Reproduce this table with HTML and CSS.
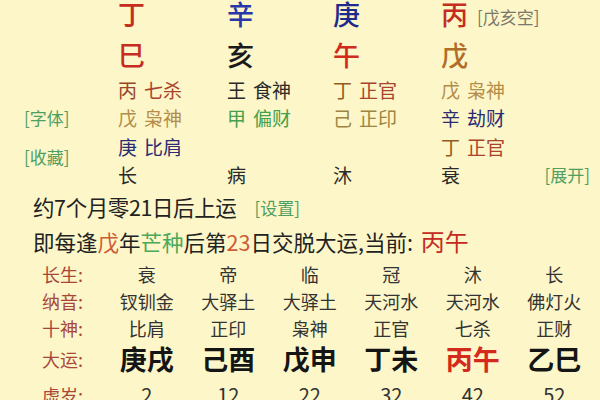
FILE: index.html
```html
<!DOCTYPE html>
<html lang="zh">
<head>
<meta charset="utf-8">
<link rel="stylesheet" href="styles.css">
</head>
<body>
<div class="pillars">
  <div class="big c-red r1 k1">丁</div>
  <div class="big c-blue r1 k2">辛</div>
  <div class="big c-navy r1 k3">庚</div>
  <div class="big c-red r1 k4">丙<span class="kong">[戊亥空]</span></div>

  <div class="big c-red r2 k1">巳</div>
  <div class="big c-black r2 k2">亥</div>
  <div class="big c-red2 r2 k3">午</div>
  <div class="big c-brown r2 k4">戊</div>

  <div class="sub r3 k1"><span class="c-rb">丙</span><span class="god c-rb2">七杀</span></div>
  <div class="sub r3 k2"><span class="c-dk">王</span><span class="god c-dk">食神</span></div>
  <div class="sub r3 k3"><span class="c-or">丁</span><span class="god c-rb2">正官</span></div>
  <div class="sub r3 k4"><span class="c-gold">戊</span><span class="god c-gold">枭神</span></div>

  <div class="link r4 k0">[字体]</div>
  <div class="sub r4 k1"><span class="c-gold">戊</span><span class="god c-gold">枭神</span></div>
  <div class="sub r4 k2"><span class="c-green">甲</span><span class="god c-green">偏财</span></div>
  <div class="sub r4 k3"><span class="c-olive">己</span><span class="god c-olive">正印</span></div>
  <div class="sub r4 k4"><span class="c-ink">辛</span><span class="god c-ink">劫财</span></div>

  <div class="link r56 k0">[收藏]</div>
  <div class="sub r5 k1"><span class="c-ink">庚</span><span class="god c-ink">比肩</span></div>
  <div class="sub r5 k4"><span class="c-or">丁</span><span class="god c-rb2">正官</span></div>

  <div class="sub c-dk r6 k1">长</div>
  <div class="sub c-dk r6 k2">病</div>
  <div class="sub c-dk r6 k3">沐</div>
  <div class="sub c-dk r6 k4">衰</div>
  <div class="link r6 k5 expand">[展开]</div>
</div>

<div class="info">
  <div class="line l1">约7个月零21日后上运<span class="set">[设置]</span></div>
  <div class="line l2">即每逢<span class="hl-red">戊</span>年<span class="hl-green">芒种</span>后第<span class="hl-red">23</span>日交脱大运,当前: <span class="now">丙午</span></div>
</div>

<div class="yun">
  <div class="lab t1">长生:</div>
  <div class="cell t1">衰</div><div class="cell t1">帝</div><div class="cell t1">临</div><div class="cell t1">冠</div><div class="cell t1">沐</div><div class="cell t1">长</div>

  <div class="lab t2">纳音:</div>
  <div class="cell t2">钗钏金</div><div class="cell t2">大驿土</div><div class="cell t2">大驿土</div><div class="cell t2">天河水</div><div class="cell t2">天河水</div><div class="cell t2">佛灯火</div>

  <div class="lab t3">十神:</div>
  <div class="cell t3">比肩</div><div class="cell t3">正印</div><div class="cell t3">枭神</div><div class="cell t3">正官</div><div class="cell t3">七杀</div><div class="cell t3">正财</div>

  <div class="lab t4">大运:</div>
  <div class="cell dy t4">庚戌</div><div class="cell dy t4">己酉</div><div class="cell dy t4">戊申</div><div class="cell dy t4">丁未</div><div class="cell dy cur t4">丙午</div><div class="cell dy t4">乙巳</div>

  <div class="lab t5">虚岁:</div>
  <div class="cell num t5">2</div><div class="cell num t5">12</div><div class="cell num t5">22</div><div class="cell num t5">32</div><div class="cell num t5">42</div><div class="cell num t5">52</div>
</div>
</body>
</html>
```

FILE: styles.css
```css
html, body {
  margin: 0;
  padding: 0;
}
body {
  width: 600px;
  height: 400px;
  overflow: hidden;
  background: #fcf6c8;
  font-family: "Noto Sans CJK SC", "Noto Sans", sans-serif;
  color: #222;
}

/* ---------- four pillars ---------- */
.pillars {
  display: grid;
  grid-template-columns: 118px 109px 106px 108px 1fr;
  grid-template-rows: 28px 48px 28px 29px 28px 28px;
}
.k0 { grid-column: 1; }
.k1 { grid-column: 2; }
.k2 { grid-column: 3; }
.k3 { grid-column: 4; }
.k4 { grid-column: 5; }
.k5 { grid-column: 5; }
.r1 { grid-row: 1; }
.r2 { grid-row: 2; }
.r3 { grid-row: 3; }
.r4 { grid-row: 4; }
.r5 { grid-row: 5; }
.r6 { grid-row: 6; }
.r56 { grid-row: 5 / 7; }

.big {
  font-size: 27px;
  font-weight: 500;
  line-height: 28px;
  white-space: nowrap;
}
.r2.big {
  padding-top: 13px;
}
.kong {
  font-size: 17px;
  font-weight: 400;
  color: #7a7868;
  margin-left: 9px;
  vertical-align: 1px;
}
.sub {
  font-size: 19px;
  line-height: 28px;
  white-space: nowrap;
}
.god {
  margin-left: 7px;
}
.link {
  font-size: 17px;
  line-height: 28px;
  color: #4f9e62;
}
.k0.link {
  padding-left: 24px;
}
.r56.link {
  align-self: center;
  padding-bottom: 8px;
}
.expand {
  justify-self: end;
  padding-right: 10px;
}

.c-red { color: #c42d1f; }
.c-red2 { color: #cf2b1b; }
.c-blue { color: #2836a8; }
.c-navy { color: #1f2b8c; }
.c-black { color: #1b1b1b; }
.c-brown { color: #b06d28; }
.c-rb { color: #9a4428; }
.c-rb2 { color: #a8432e; }
.c-dk { color: #2a2a2a; }
.c-or { color: #925a1e; }
.c-gold { color: #b48c4a; }
.c-green { color: #45a04c; }
.c-olive { color: #9e8440; }
.c-ink { color: #2b2c72; }

/* ---------- info lines ---------- */
.info {
  padding-left: 33px;
  font-size: 21.5px;
  color: #222;
  white-space: nowrap;
}
.l1 { line-height: 36px; letter-spacing: -0.4px; }
.l2 { line-height: 30px; }
.set {
  font-size: 17px;
  letter-spacing: 0;
  color: #4f9e62;
  margin-left: 18px;
  vertical-align: 1px;
}
.hl-red { color: #cf5a36; }
.hl-green { color: #4aa85a; }
.now {
  font-size: 24px;
  color: #c42a22;
  margin-left: 3px;
}

/* ---------- da yun table ---------- */
.yun {
  margin-top: 4px;
  display: grid;
  grid-template-columns: 106px repeat(6, 81.5px);
  grid-template-rows: 27px 27px 27px 34px 38px;
}
.lab {
  padding-left: 42px;
  font-size: 18px;
  color: #a8463a;
  line-height: 27px;
  white-space: nowrap;
}
.t4.lab { line-height: 34px; }
.t5.lab { line-height: 38px; }
.cell {
  text-align: center;
  font-size: 18px;
  line-height: 27px;
  color: #333;
  white-space: nowrap;
}
.dy {
  font-size: 27px;
  font-weight: 700;
  line-height: 34px;
  color: #151515;
}
.dy.cur { color: #d42a1e; }
.num {
  font-size: 20px;
  line-height: 38px;
}
```
